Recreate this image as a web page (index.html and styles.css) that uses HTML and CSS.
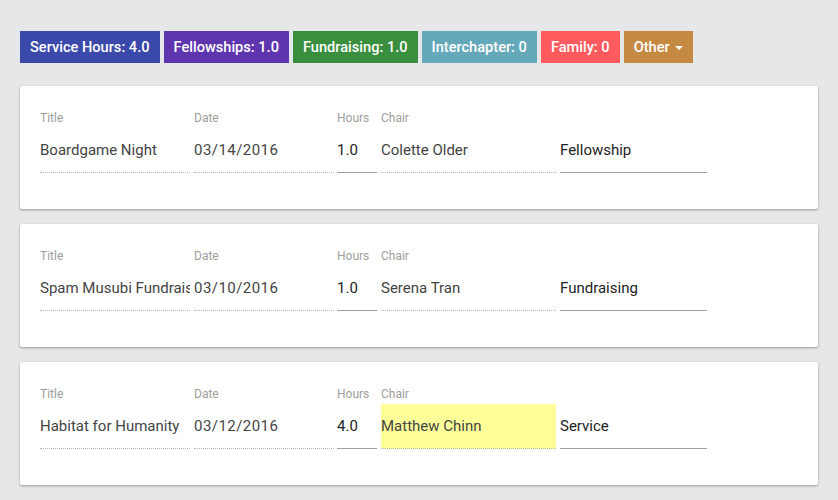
FILE: index.html
```html
<!DOCTYPE html>
<html>
<head>
<meta charset="utf-8">
<link rel="stylesheet" href="styles.css">
</head>
<body>
<div class="page">
  <div class="badges">
    <span class="badge b-service">Service Hours: 4.0</span>
    <span class="badge b-fellow">Fellowships: 1.0</span>
    <span class="badge b-fund">Fundraising: 1.0</span>
    <span class="badge b-inter">Interchapter: 0</span>
    <span class="badge b-family">Family: 0</span>
    <span class="badge b-other">Other <span class="caret"></span></span>
  </div>

  <div class="card">
    <div class="field f-title"><div class="label">Title</div><div class="input disabled">Boardgame Night</div></div>
    <div class="field f-date"><div class="label">Date</div><div class="input disabled date">03/14/2016</div></div>
    <div class="field f-hours"><div class="label">Hours</div><div class="input">1.0</div></div>
    <div class="field f-chair"><div class="label">Chair</div><div class="input disabled">Colette Older</div></div>
    <div class="field f-type"><div class="label">&nbsp;</div><div class="input">Fellowship</div></div>
  </div>

  <div class="card">
    <div class="field f-title"><div class="label">Title</div><div class="input disabled">Spam Musubi Fundraiser</div></div>
    <div class="field f-date"><div class="label">Date</div><div class="input disabled date">03/10/2016</div></div>
    <div class="field f-hours"><div class="label">Hours</div><div class="input">1.0</div></div>
    <div class="field f-chair"><div class="label">Chair</div><div class="input disabled">Serena Tran</div></div>
    <div class="field f-type"><div class="label">&nbsp;</div><div class="input">Fundraising</div></div>
  </div>

  <div class="card">
    <div class="field f-title"><div class="label">Title</div><div class="input disabled">Habitat for Humanity</div></div>
    <div class="field f-date"><div class="label">Date</div><div class="input disabled date">03/12/2016</div></div>
    <div class="field f-hours"><div class="label">Hours</div><div class="input">4.0</div></div>
    <div class="field f-chair"><div class="label">Chair</div><div class="input disabled highlight">Matthew Chinn</div></div>
    <div class="field f-type"><div class="label">&nbsp;</div><div class="input">Service</div></div>
  </div>
</div>
</body>
</html>
```

FILE: styles.css
```css
html, body {
  margin: 0;
  padding: 0;
}
body {
  background: #e6e7e8;
  font-family: Roboto, "Liberation Sans", sans-serif;
  width: 838px;
  height: 500px;
  overflow: hidden;
}
.page {
  padding: 31px 20px 0 20px;
}
.badges {
  display: flex;
  gap: 4px;
  margin-bottom: 23px;
}
.badge {
  display: inline-flex;
  align-items: center;
  height: 32px;
  padding: 0 10px;
  color: #fff;
  font-size: 14.6px;
  font-weight: 500;
  box-sizing: border-box;
}
.b-service { background: #3a49aa; }
.b-fellow { background: #5f35af; }
.b-fund { background: #3a8f3e; }
.b-inter { background: #65a8b9; }
.b-family { background: #ff5b5e; }
.b-other { background: #c58a41; }
.caret {
  display: inline-block;
  width: 0;
  height: 0;
  margin-left: 5px;
  margin-top: 2px;
  border-left: 4px solid transparent;
  border-right: 4px solid transparent;
  border-top: 4px solid #fff;
}
.card {
  background: #fff;
  box-shadow: 0 1px 3px rgba(0,0,0,0.22), 0 1px 2px rgba(0,0,0,0.14);
  border-radius: 2px;
  height: 123px;
  box-sizing: border-box;
  padding: 25px 20px 0 20px;
  display: flex;
  margin-bottom: 15px;
}
.field {
  display: flex;
  flex-direction: column;
  margin-right: 4px;
}
.f-title { width: 150px; }
.f-date { width: 140px; margin-right: 3px; }
.f-hours { width: 40px; }
.f-chair { width: 175px; }
.f-type { width: 147px; }
.label {
  font-size: 12px;
  line-height: 14px;
  height: 14px;
  color: #9e9e9e;
}
.input {
  margin-top: 3px;
  height: 45px;
  box-sizing: border-box;
  font-size: 15px;
  line-height: 44px;
  color: #222;
  white-space: nowrap;
  overflow: hidden;
  border-bottom: 1px solid #9e9e9e;
}
.input.disabled {
  color: #444;
  border-bottom: 1px dotted #b5b5b5;
}
.input.date {
  letter-spacing: 0.45px;
}
.highlight {
  background: #ffff99;
  border-bottom-color: #c8c870;
}
```
